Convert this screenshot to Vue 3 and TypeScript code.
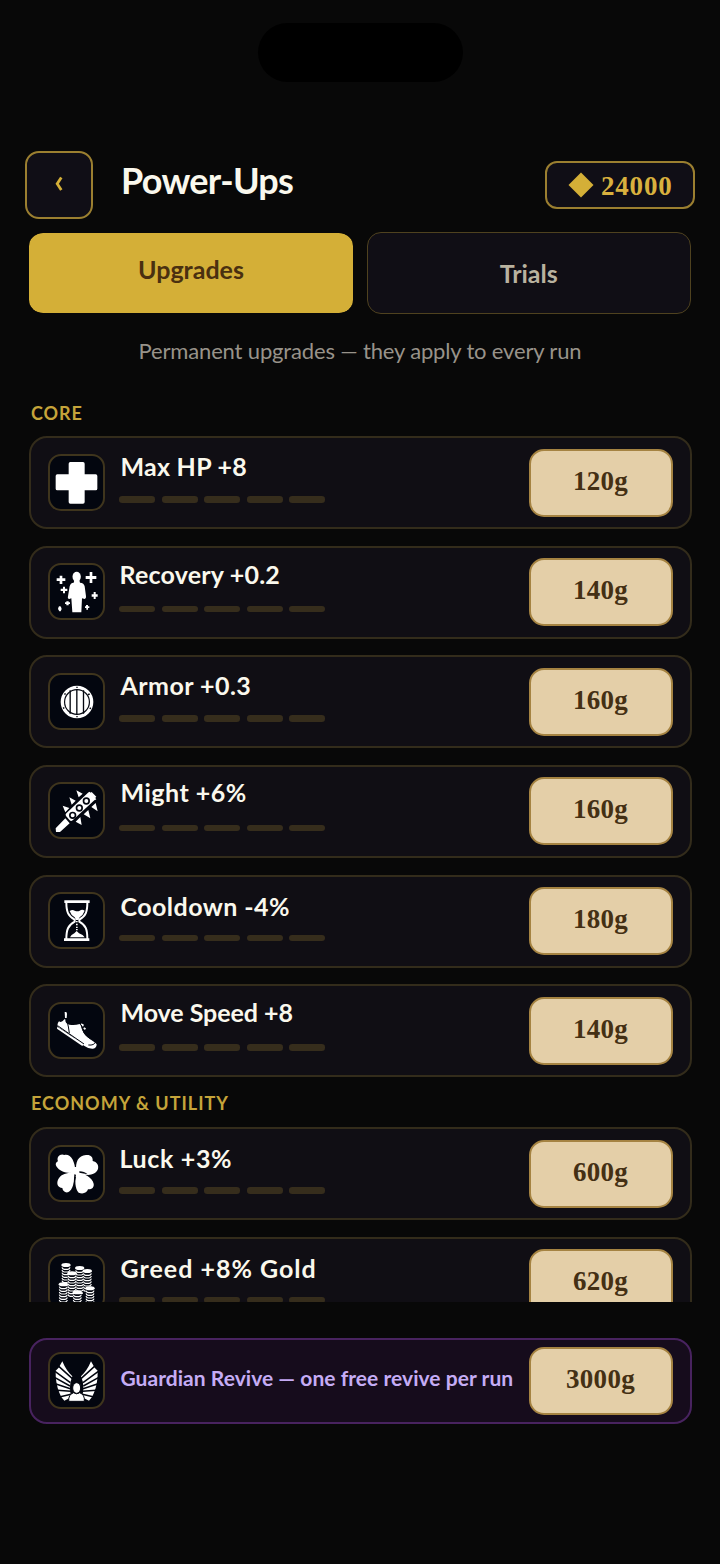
<script setup lang="ts">
interface Upgrade {
  label: string
  price: string
  icon: string
  baseline: number
  indent: number
  spacing: number
}

const levels = 5

const core: Upgrade[] = [
  { label: 'Max HP +8', price: '120g', icon: 'cross', baseline: 39.5, indent: 1.5, spacing: 0.25 },
  { label: 'Recovery +0.2', price: '140g', icon: 'recovery', baseline: 38, indent: 0.5, spacing: 0.2 },
  { label: 'Armor +0.3', price: '160g', icon: 'shield', baseline: 40, indent: 1.5, spacing: 0.45 },
  { label: 'Might +6%', price: '160g', icon: 'club', baseline: 37.5, indent: 1.5, spacing: 0.5 },
  { label: 'Cooldown -4%', price: '180g', icon: 'hourglass', baseline: 41, indent: 1.5, spacing: 0.45 },
  { label: 'Move Speed +8', price: '140g', icon: 'shoe', baseline: 37.5, indent: 1.5, spacing: -0.05 },
]

const economy: Upgrade[] = [
  { label: 'Luck +3%', price: '600g', icon: 'clover', baseline: 41, indent: 0.5, spacing: 0.65 },
  { label: 'Greed +8% Gold', price: '620g', icon: 'coins', baseline: 41, indent: 1.5, spacing: 1 },
]

const groups = [
  { title: 'CORE', name: 'core', items: core },
  { title: 'ECONOMY & UTILITY', name: 'economy', items: economy },
]

const viewBoxes: Record<string, string> = {
  cross: '91 200 159 159',
  recovery: '30 33 159 159',
  shield: '30 32 159 159',
  club: '30 31 159 159',
  hourglass: '30 30 159 159',
  shoe: '30 30 159 159',
  clover: '30 30 159 159',
  coins: '91 80 159 159',
}

// Each stack: left edge, top of the uppermost coin, number of coins below it
const stacks = [
  { x: 125, y: 107, n: 9 },
  { x: 166, y: 116, n: 9 },
  { x: 189, y: 125, n: 7 },
  { x: 143, y: 132, n: 8 },
  { x: 117, y: 165, n: 8 },
  { x: 197, y: 177, n: 7 },
  { x: 159, y: 189, n: 6 },
]
</script>

<template>
  <main class="screen">
    <div class="island"></div>

    <header class="header">
      <button class="back" aria-label="Back">
        <svg width="10" height="18" viewBox="0 0 10 18"><path d="M7.3 2.5 L3.2 8.8 L7.3 15.1" /></svg>
      </button>
      <h1>Power-Ups</h1>
      <div class="wallet">
        <svg width="26" height="26" viewBox="0 0 26 26"><path d="M13 .5 25.5 13 13 25.5 .5 13Z" /></svg>
        <span>24000</span>
      </div>
    </header>

    <nav class="tabs">
      <button class="tab active"><span>Upgrades</span></button>
      <button class="tab"><span>Trials</span></button>
    </nav>

    <p class="intro"><span>Permanent upgrades — they apply to every run</span></p>

    <div class="list">
      <section v-for="group in groups" :key="group.name" :class="group.name">
        <h2>{{ group.title }}</h2>
        <div class="cards">
          <article v-for="item in group.items" :key="item.label" class="card">
            <div class="tile">
              <svg :viewBox="viewBoxes[item.icon]">
                <path v-if="item.icon === 'cross'" d="M152 218h38q5 0 5 5v32h33q5 0 5 5v38q0 5-5 5h-33v35q0 5-5 5h-38q-5 0-5-5v-35h-34q-5 0-5-5v-38q0-5 5-5h34v-32q0-5 5-5Z" />
                <g v-else-if="item.icon === 'recovery'">
                  <ellipse cx="110" cy="68" rx="12.5" ry="15" />
                  <path d="M103 79h15l2 7q12 1 14 11l4 30q1 8-4 8l-8-2-2 42H97l-3-42-6 2q-6 0-4-8l5-30q2-10 12-11Z" />
                  <path d="M59 65h8v8h9v8h-9v9h-8v-9h-9v-8h9ZM149 54h8v12h12v9h-12v12h-8V75h-12v-9h12ZM69 98h6v6h7v7h-7v7h-6v-7h-7v-7h7ZM161 114h6v7h6v7h-6v7h-6v-7h-6v-7h6ZM79 142h7v3h4v5h-4v4h-7v-4h-4v-5h4ZM56 158l4-2 3 3 2 6-3 7h-4l-4-7ZM138 153h6v4h4v5h-4v5h-5v-5h-4v-5h3Z" />
                </g>
                <g v-else-if="item.icon === 'shield'">
                  <circle cx="111" cy="113" r="44" fill="none" stroke="#fff" stroke-width="10" />
                  <circle cx="111" cy="113" r="35.5" />
                  <path class="bars" d="M90.5 78v70M110.500 75v76M130.500 78v70" />
                  <path class="cut" d="M109 67h4v4h-4ZM72 88l4-2 2 4-4 2ZM143 89l5-2 2 4-5 2ZM68 130l4-2 2 4-4 2ZM150 129l4 2-2 4-4-2ZM109 155h4v4h-4Z" />
                </g>
                <g v-else-if="item.icon === 'club'">
                  <path d="m79 119 65-62q4-3 8 1l12 14q3 4-1 8l-65 60q-5 4-9 0l-11-13q-3-5 1-8Z" />
                  <path d="m76 134 13 15-29 26H48l-1-11ZM145 57l4-3 20 23-5 3Z" />
                  <path d="m109 50 19 10-12 11ZM88 71l19 10-12 12ZM68 96l20 7-12 13ZM167 88l6 25-19-13ZM145 109l6 25-20-12ZM121 130l4 24-18-10Z" />
                  <g class="engrave"><circle cx="98" cy="125" r="8.5" /><circle cx="118" cy="103" r="8.5" /><circle cx="139" cy="82" r="8.5" /></g>
                  <path d="m151 58 4-3 14 14-4 5Z" />
                </g>
                <g v-else-if="item.icon === 'hourglass'">
                  <path d="M73 49h76v8H73ZM72 163h76v8H72Z" />
                  <path class="line" d="M79 55c0 28 5 41 25 52v6c-20 11-25 24-25 52M142 55c0 28-4 41-24 52v6c20 11 24 24 24 52" />
                  <path d="M89 81q8-6 15-1 9 4 15 0 8-5 15 0-5 14-15 20l-4 8h-7l-4-8Q93 94 89 81ZM90 160q3-8 13-12l7-7 7 7q13 4 17 12Z" />
                  <path d="M108 111h5v4h-5ZM108 119h5v5h-5ZM108 128h5v4h-5ZM108 135h5v4h-5Z" />
                </g>
                <g v-else-if="item.icon === 'shoe'">
                  <path d="M57 82q8 6 16-6l3 0q-1 13 12 16 16 3 31-2 5 5 7 14 5 19 20 28l12 9q8 4 12 10 0 12-11 13-13 1-27-9L91 122l-37-24q-4-8 3-16ZM74 54h5l2 5-1 13h-5ZM124 88l8 4-3 6-6-4ZM132 100l6 3-3 5-5-4Z" />
                  <path d="m52 98 79 53-4 5-76-52Z" />
                  <path class="thin" d="m53 95 40 28 39 27M81 81q5 18 7 36M124 93q4 28 28 42M145 153q18 2 22-10M139 111l6 10M150 129l6 5" />
                </g>
                <g v-else-if="item.icon === 'clover'">
                  <path d="M106 105C88 112 60 106 49 88 45 80 49 75 54 73 48 59 62 48 73 54 91 49 106 72 106 105ZM109 102C105 76 115 55 138 54 151 52 160 60 158 72 171 75 177 84 174 96 164 119 133 118 109 102ZM104 109C105 132 98 161 84 166 74 168 68 161 67 153 53 151 49 140 54 128 62 111 81 105 104 109ZM111 107C132 107 158 122 161 140 163 151 155 158 144 157 141 168 128 172 116 167 105 154 103 130 111 107Z" />
                  <path d="M92 90h30v30H92Z" />
                  <path class="cut" d="m103 112 5 1-7 42-1-1ZM118 103q15 0 25 9-13-3-25-5Z" />
                </g>
                <g v-else-if="item.icon === 'coins'">
                  <g v-for="stack in stacks" :key="stack.x" :transform="`translate(${stack.x} ${stack.y})`">
                    <path class="backing" d="M1 5h26v72H1Z" />
                    <ellipse cx="14" cy="0" rx="14" ry="6" />
                    <path v-for="n in stack.n" :key="n" class="coin" :transform="`translate(0 ${n * 8})`" d="M2-1q1 5 7 6h10q6-1 7-6" />
                  </g>
                </g>
              </svg>
            </div>
            <div class="details">
              <h3 :style="{ height: item.baseline + 'px', marginLeft: item.indent + 'px', letterSpacing: item.spacing + 'px' }">{{ item.label }}</h3>
              <div class="pips"><i v-for="level in levels" :key="level"></i></div>
            </div>
            <button class="price">{{ item.price }}</button>
          </article>
        </div>
      </section>
    </div>

    <article class="card guardian">
      <div class="tile">
        <svg viewBox="91 372 159 159">
          <g id="wing">
            <path d="M128 394q11 27 30 45-7 16-7 32 0 20 5 30l-22 11q-10-9-15-24-12-30-11-66l9-9Z" />
            <path class="feather" d="m115 407 43 39M106 424l46 34M106 443l45 25M109 462l43 14M112 481l42 3M122 500l32-7" />
          </g>
          <use href="#wing" transform="translate(342 0) scale(-1 1)" />
          <ellipse class="halo" cx="171" cy="474" rx="12" ry="16" />
          <path class="halo" d="M147 514q-1-21 15-26 9 7 18 0 16 6 14 26Z" />
        </svg>
      </div>
      <h3>Guardian Revive — one free revive per run</h3>
      <button class="price">3000g</button>
    </article>
  </main>
</template>

<style>
html,
body {
  margin: 0;
  background: #080808;
}
</style>

<style scoped>
* {
  box-sizing: border-box;
}
.screen {
  width: 720px;
  height: 1564px;
  overflow: hidden;
  background: #080808;
  font-family: Lato, 'Open Sans', sans-serif;
  color: #faf8ed;
}
h1,
h2,
h3,
p {
  margin: 0;
}
button {
  padding: 0;
  font: inherit;
}
.island {
  width: 205px;
  height: 59px;
  margin: 23px auto 0;
  border-radius: 30px;
  background: #000;
}
.header {
  display: flex;
  align-items: flex-start;
  height: 67px;
  margin: 69px 25px 0;
}
.back {
  display: grid;
  place-items: center;
  width: 68px;
  height: 68px;
  border: 2px solid #9b7f30;
  border-radius: 14px;
  background: #100e16;
}
.back svg {
  margin-top: -2px;
  fill: none;
  stroke: #d4af37;
  stroke-width: 2.8;
}
h1 {
  margin: 7px auto 0 28px;
  font-size: 36px;
  line-height: 44px;
  font-weight: 700;
  letter-spacing: -0.7px;
  white-space: nowrap;
}
.wallet {
  display: flex;
  align-items: center;
  gap: 7px;
  width: 150px;
  height: 48px;
  margin-top: 10px;
  padding: 0 0 1px 21px;
  border: 2px solid #9b7f30;
  border-radius: 12px;
  background: #100e16;
  color: #d9b13e;
  font: 700 27px/44px 'Liberation Serif', serif;
  letter-spacing: 0.8px;
}
.wallet span {
  padding-top: 2px;
}
.wallet svg {
  flex: none;
  fill: #d4af37;
}
.tabs {
  display: flex;
  justify-content: space-between;
  margin: 14px 29px 0;
}
.tab {
  width: 324.5px;
  height: 82px;
  border: 1.5px solid #4f421f;
  border-radius: 14px;
  background: #100e15;
  color: #b9b29f;
  font-size: 25px;
  font-weight: 700;
}
.tab.active {
  width: 324px;
  border-color: #080808;
  border-width: 1px 0;
  background: #d4af37;
  background-clip: padding-box;
  color: #4a3010;
}
.tab span {
  display: block;
}
.tab.active span {
  margin-top: -8px;
}
.intro {
  margin-top: 23px;
  color: #98938a;
  text-align: center;
  font-size: 22px;
  line-height: 28px;
  letter-spacing: -0.16px;
  white-space: nowrap;
}
.list {
  height: 924px;
  margin-top: 13px;
  padding: 0 28.5px;
  overflow: hidden;
}
h2 {
  padding: 23px 0 0 2.5px;
  height: 58px;
  color: #c5a43a;
  font-size: 18px;
  line-height: 24px;
  font-weight: 700;
  letter-spacing: 0.9px;
  white-space: nowrap;
}
.economy h2 {
  height: 50px;
  padding-top: 14px;
  letter-spacing: 1px;
}
.cards {
  display: flex;
  flex-direction: column;
  gap: 16.65px;
}
.card {
  display: flex;
  align-items: flex-start;
  height: 93px;
  padding: 0 17px;
  border: 2px solid #332c1b;
  border-radius: 18px;
  background: #100e14;
}
.tile {
  flex: none;
  width: 57px;
  height: 57px;
  margin-top: 15.5px;
  border: 2px solid #3f351d;
  border-radius: 13px;
  background: #03060f;
}
.tile svg {
  display: block;
  width: 53px;
  height: 53px;
  fill: #fff;
}
.cut {
  fill: #03060f;
}
.bars {
  fill: none;
  stroke: #03060f;
  stroke-width: 4;
}
.engrave {
  fill: #fff;
  stroke: #03060f;
  stroke-width: 5;
}
.line {
  fill: none;
  stroke: #fff;
  stroke-width: 6;
}
.thin {
  fill: none;
  stroke: #03060f;
  stroke-width: 3;
}
.backing {
  fill: #03060f;
}
.coin {
  fill: none;
  stroke: #fff;
  stroke-width: 3.5;
}
.feather {
  fill: none;
  stroke: #03060f;
  stroke-width: 4.5;
}
.halo {
  stroke: #03060f;
  stroke-width: 3;
}
.details {
  flex: 1;
  position: relative;
  height: 89px;
  margin-left: 14.5px;
}
h3 {
  display: flex;
  align-items: flex-end;
  font-size: 25px;
  line-height: 23px;
  font-weight: 700;
  white-space: nowrap;
}
.pips {
  position: absolute;
  top: 58px;
  left: 0;
  display: flex;
  gap: 6.5px;
}
.pips i {
  width: 36px;
  height: 6.5px;
  border-radius: 3.2px;
  background: #362d1c;
}
.price {
  flex: none;
  width: 144px;
  height: 68px;
  margin-top: 10.5px;
  padding-bottom: 4px;
  border: 2px solid #a58342;
  border-radius: 15px;
  background: #e4cfa8;
  color: #443014;
  font: 700 27px/30px 'Liberation Serif', serif;
  letter-spacing: 0.3px;
}
.guardian {
  height: 86px;
  margin: 36px 28.5px 0;
  border-color: #48235f;
  background: #160c1c;
}
.guardian .tile {
  margin-top: 12px;
}
.guardian h3 {
  flex: 1;
  margin: 26px 0 0 16px;
  color: #c5acf5;
  font-size: 21px;
  letter-spacing: 0.04px;
}
.guardian .price {
  margin-top: 7px;
}
</style>
